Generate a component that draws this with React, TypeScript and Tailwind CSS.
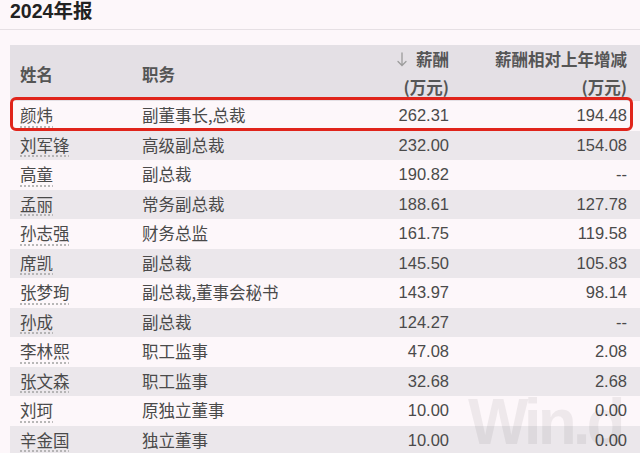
import React from "react";

const rows: [string, string, string, string][] = [
  ["颜炜", "副董事长,总裁", "262.31", "194.48"],
  ["刘军锋", "高级副总裁", "232.00", "154.08"],
  ["高童", "副总裁", "190.82", "--"],
  ["孟丽", "常务副总裁", "188.61", "127.78"],
  ["孙志强", "财务总监", "161.75", "119.58"],
  ["席凯", "副总裁", "145.50", "105.83"],
  ["张梦珣", "副总裁,董事会秘书", "143.97", "98.14"],
  ["孙成", "副总裁", "124.27", "--"],
  ["李林熙", "职工监事", "47.08", "2.08"],
  ["张文森", "职工监事", "32.68", "2.68"],
  ["刘珂", "原独立董事", "10.00", "0.00"],
  ["辛金国", "独立董事", "10.00", "0.00"],
];

const cjk = { fontFamily: '"Noto Sans CJK SC", "Noto Sans", sans-serif' };
const num = { fontFamily: '"Liberation Sans", Arial, sans-serif' };

export default function App() {
  return (
    <div className="relative w-[640px] h-[453px] overflow-hidden bg-[#fdf7fa] text-[#4a4a4a]" style={cjk}>
      <div className="h-[30px] border-b border-[#e6e0e4] pl-[10px] flex items-start">
        <span className="text-[19.5px] font-bold leading-[24px] text-[#222] mt-[-1px]" style={{ fontFamily: '"Liberation Sans", "Noto Sans CJK SC", sans-serif' }}>
          2024年报
        </span>
      </div>
      <div className="ml-[10px] mt-[15px]">
        <div className="flex h-[56px] bg-[#e4e0e5] font-bold text-[16.5px] text-[#555]">
          <div className="w-[132px] pl-[10px] flex items-center pt-[3px]">姓名</div>
          <div className="w-[150px] flex items-center pt-[3px]">职务</div>
          <div className="w-[157px] text-right leading-[28px]">
            <div className="flex items-center justify-end">
              <svg width="10" height="15" viewBox="0 0 10 15" className="mr-[9px]" fill="none" stroke="#9c9c9c" strokeWidth="1.3" strokeLinecap="round">
                <path d="M5 1 V13.5 M1 9.5 L5 13.5 L9 9.5" />
              </svg>
              <span>薪酬</span>
            </div>
            <div>(万元)</div>
          </div>
          <div className="flex-1 text-right pr-[13px] leading-[28px]">
            <div>薪酬相对上年增减</div>
            <div>(万元)</div>
          </div>
        </div>
        {rows.map((r, i) => (
          <div
            key={i}
            className={`relative flex h-[29.5px] items-center text-[16.5px] ${i % 2 === 1 ? "bg-[#ebe7eb]" : "bg-[#fdf7fa]"}`}
          >
            <div className="w-[132px] pl-[10px]">
              <span className="underline decoration-dotted decoration-[#aaa] underline-offset-[4px]">{r[0]}</span>
            </div>
            <div className="w-[150px]">{r[1]}</div>
            <div className="w-[157px] text-right text-[16.5px]" style={num}>{r[2]}</div>
            <div className="flex-1 text-right pr-[13px] text-[16.5px]" style={num}>{r[3]}</div>
            {i === 0 && (
              <div className="absolute left-0 right-[7px] top-[-4px] bottom-0 border-[3px] border-[#e0241b] rounded-[6px] pointer-events-none" />
            )}
          </div>
        ))}
      </div>
      <div
        className="absolute left-[468px] top-[390px] text-[64px] font-bold tracking-[-4px] text-black/[0.06] pointer-events-none leading-none"
        style={num}
      >
        Win.d
      </div>
    </div>
  );
}
